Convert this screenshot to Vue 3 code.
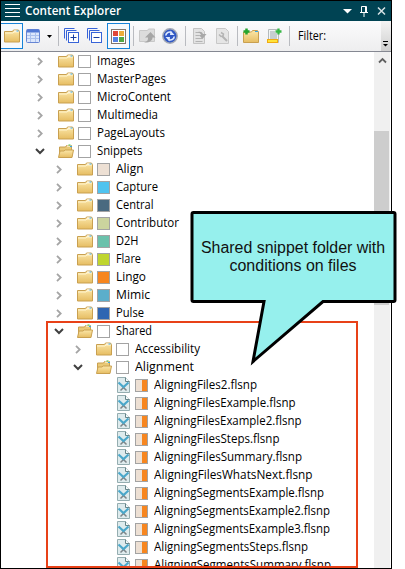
<script setup>
const folders = [
  ['Images', 38], ['MasterPages', 69], ['MicroContent', 74], ['Multimedia', 61], ['PageLayouts', 68],
].map(([text, w]) => ({ text, w, level: 0, kind: 'closed', colors: ['#fff'] }))
const conditions = [
  ['Align', 27.5, '#ede0d4'], ['Capture', 42, '#50c3ef'], ['Central', 37.5, '#4a6a80'],
  ['Contributor', 63, '#cbd49e'], ['D2H', 22.5, '#6bc1ab'], ['Flare', 25, '#bfd52e'],
  ['Lingo', 30, '#f7861f'], ['Mimic', 34, '#5baecb'], ['Pulse', 28, '#2f66b2'],
].map(([text, w, c]) => ({ text, w, level: 1, kind: 'closed', colors: [c] }))
const files = [
  ['AligningFiles2.flsnp', 103], ['AligningFilesExample.flsnp', 141.5], ['AligningFilesExample2.flsnp', 147.5],
  ['AligningFilesSteps.flsnp', 125.5], ['AligningFilesSummary.flsnp', 148], ['AligningFilesWhatsNext.flsnp', 158.5],
  ['AligningSegmentsExample.flsnp', 170], ['AligningSegmentsExample2.flsnp', 176], ['AligningSegmentsExample3.flsnp', 176],
  ['AligningSegmentsSteps.flsnp', 154], ['AligningSegmentsSummary.flsnp', 177],
].map(([text, w]) => ({ text, w, level: 3, kind: 'file', colors: ['#ede0d4', '#f7861f'] }))
const rows = [
  ...folders,
  { text: 'Snippets', w: 45.5, level: 0, kind: 'open', colors: ['#fff'] },
  ...conditions,
  { text: 'Shared', w: 36, level: 1, kind: 'open', colors: ['#fff'] },
  { text: 'Accessibility', w: 65, level: 2, kind: 'closed', colors: ['#fff'] },
  { text: 'Alignment', w: 59, level: 2, kind: 'open', colors: ['#fff'] },
  ...files,
]
</script>

<template>
  <div class="window">
    <svg class="defs" width="0" height="0">
      <defs>
        <linearGradient id="gold" x1="0" y1="0" x2="0" y2="1"><stop offset="0" stop-color="#fbe7a9" /><stop offset="1" stop-color="#e6bd62" /></linearGradient>
        <symbol id="closed" viewBox="0 0 16 14">
          <path d="M.5 13V2.5h8l1-1.500h5l1 1.500V13z" fill="url(#gold)" stroke="#c9a050" />
          <path d="M1 4h8l1-1h5" fill="none" stroke="#fff4cd" />
          <path d="M10 2h4" stroke="#fff" /><path d="M12.500 2h2" stroke="#35a7e8" />
        </symbol>
        <symbol id="open" viewBox="0 0 16 14">
          <path d="M1.500 13V3h6l1-1.500h5V12z" fill="#e9c977" stroke="#c9a050" />
          <path d="M9 2h4" stroke="#fff" /><path d="M10.500 1h2" stroke="#44c33d" /><path d="M12 2.500h2" stroke="#35a7e8" />
          <path d="M.5 13.500L2 7h4l1.200-1h8.300L14 13.500z" fill="url(#gold)" stroke="#c9a050" />
        </symbol>
        <symbol id="file" viewBox="0 0 13 16">
          <path d="M.5.5h8l4 4v11H.5z" fill="#deebed" stroke="#94adb0" />
          <path d="M8.500.5v4h4" fill="#f5fafa" stroke="#66858a" />
          <path d="M3.500 13.500L8 9M9.500 13.500L5 9" stroke="#7d8589" stroke-width="1.500" />
          <path d="M1.500 5.500L7 10.500M11.500 5.500L6 10.500" stroke="#4aa7ca" stroke-width="2.200" />
        </symbol>
      </defs>
    </svg>

    <header class="title">
      <svg width="16" height="14" viewBox="0 0 16 14"><path d="M0 .5h15M0 4.500h15M0 8.500h15M0 12.500h15" stroke="#fff" /></svg>
      <svg class="heading" width="100" height="18"><text x="0" y="13" textLength="96" lengthAdjust="spacingAndGlyphs">Content Explorer</text></svg>
      <svg class="controls" width="44" height="12" viewBox="0 0 44 12">
        <path d="M0 4h9L4.500 8.500z" fill="#fff" />
        <path d="M18.500 7V1.500h5V7M22.500 1.500V7M17 7.500h8M21 8v4" fill="none" stroke="#fff" />
        <path d="M35 2.500l7 7M42 2.500l-7 7" stroke="#d6e2e5" stroke-width="1.500" />
      </svg>
    </header>

    <div class="toolbar">
      <div class="tool first active"><svg width="16" height="14"><use href="#closed" /></svg></div>
      <div class="tool grid"><svg width="26" height="15" viewBox="0 0 26 15">
        <rect x=".5" y=".5" width="13" height="13" rx="1" fill="#dce7fc" stroke="#6685d3" />
        <path d="M1 2h12" stroke="#5279d5" stroke-width="3" /><path d="M1 6.500h12M1 9.500h12M4.500 4v9M9.500 4v9" stroke="#abc1ed" />
        <path d="M21 6h5l-2.500 3z" fill="#000" />
      </svg></div>
      <i class="sep s1"></i>
      <div class="tool plus"><svg width="15" height="16" viewBox="0 0 15 16"><g fill="#fff" stroke="#3864d8"><path d="M.5 10.500V.5h10M2.500 12.500v-10h10" fill="none" /><rect x="4.500" y="4.500" width="10" height="10" /><path d="M6.500 9.500h6M9.500 6.500v6" stroke="#173ca0" /></g></svg></div>
      <div class="tool minus"><svg width="15" height="16" viewBox="0 0 15 16"><g fill="#fff" stroke="#3864d8"><path d="M.5 10.500V.5h10M2.500 12.500v-10h10" fill="none" /><rect x="4.500" y="4.500" width="10" height="10" /><path d="M6.500 9.500h6" stroke="#173ca0" /></g></svg></div>
      <div class="tool tiles active"><svg width="15" height="15" viewBox="0 0 15 15"><rect x=".5" y=".5" width="14" height="14" fill="#fff" stroke="#82756c" /><rect x="2" y="2" width="5" height="5" fill="#df4639" /><rect x="8" y="2" width="5" height="5" fill="#edac39" /><rect x="2" y="8" width="5" height="5" fill="#5481e2" /><rect x="8" y="8" width="5" height="5" fill="#53a844" /></svg></div>
      <i class="sep s2"></i>
      <div class="tool upload"><svg width="17" height="16" viewBox="0 0 17 16"><path d="M.5 13.500v-11h8l1-1.500h6v12.500z" fill="#dcdcdc" stroke="#c8c8c8" /><path d="M5 14.500c4-1 4-3 4-5H6L11.500 4l5 5.500h-3c0 3-3 5.500-8.500 5z" fill="#a6a6a6" /></svg></div>
      <div class="tool refresh"><svg width="16" height="16" viewBox="0 0 16 16"><circle cx="8" cy="8" r="7.200" fill="#2f57c4" stroke="#a3a9b5" stroke-width="1.500" /><path d="M3.800 7.500C4 4.500 7 3.300 9.500 4.500M12.200 8.500C12 11.500 9 12.700 6.500 11.500" fill="none" stroke="#dce8ff" stroke-width="1.700" /><path d="M8.500 2.500l4 4.500H8zM7.500 13.500l-4-4.500H8z" fill="#dce8ff" /></svg></div>
      <i class="sep s3"></i>
      <div class="tool doc"><svg width="14" height="16" viewBox="0 0 14 16"><path d="M.5.5h8l3 3v12H.5z" fill="#e3e3e3" stroke="#c3c3c3" /><path d="M2.500 4.500h4M2.500 7.500h4M2.500 10.500h7M2.500 13.500h7" stroke="#b3b3b3" /><path d="M5 4c3-.5 4 0 5 2h3.500L9.500 11 6 7h2C7.500 5.500 6.500 5 5 4z" fill="#a8a8a8" /></svg></div>
      <div class="tool wrench"><svg width="14" height="16" viewBox="0 0 14 16"><path d="M.5.5h9l3 3v12H.5z" fill="#e5e5e5" stroke="#c8c8c8" /><path d="M6 8l5 5" stroke="#b4b4b4" stroke-width="2" /><path d="M5 4.500L7.500 6 7 8 5 8.500 3 6.500" fill="none" stroke="#b4b4b4" stroke-width="1.500" /></svg></div>
      <i class="sep s4"></i>
      <div class="tool newfolder"><svg width="16" height="16" viewBox="0 0 16 16"><path d="M.5 14.500V4h8l1-1.500h5l1 1.500v10.500z" fill="url(#gold)" stroke="#c9a050" /><path d="M12 3.500h3" stroke="#35a7e8" /><path d="M3.500.5v6M.5 3.500h6" stroke="#24a52e" stroke-width="2.500" /></svg></div>
      <div class="tool newfile"><svg width="16" height="16" viewBox="0 0 16 16"><path d="M1.500 1.500h10v13h-10z" fill="#f2f4f4" stroke="#b4babc" /><path d="M3 4h5M3 6h7M3 8h7M3 10h7" stroke="#9ba8ac" /><path d="M11.500.5v6M8.500 3.500h6" stroke="#36b744" stroke-width="2.300" /><rect x=".5" y="11.500" width="10" height="3" fill="#ffe438" stroke="#f0aa13" /></svg></div>
      <i class="sep s5"></i>
      <svg class="filter" width="34" height="18"><text x="0" y="13" textLength="28" lengthAdjust="spacingAndGlyphs">Filter:</text></svg>
      <div class="overflow"><svg width="6" height="6" viewBox="0 0 6 6"><path d="M0 .5h5" stroke="#000" /><path d="M0 3h5L2.500 5.500z" /></svg></div>
    </div>

    <main class="content">
      <div class="tree">
        <div v-for="row in rows" :key="row.text" :class="['row', 'level' + row.level]">
          <div class="chevron">
            <svg v-if="row.kind === 'closed'" width="6" height="9" viewBox="0 0 6 9"><path d="M1 .8l3.700 3.700L1 8.200" fill="none" stroke="#a5a5a5" stroke-width="1.800" /></svg>
            <svg v-else-if="row.kind === 'open'" width="10" height="7" viewBox="0 0 10 7"><path d="M1 1l4 4 4-4" fill="none" stroke="#404040" stroke-width="2" /></svg>
          </div>
          <div class="icon">
            <svg v-if="row.kind === 'file'" width="13" height="16"><use href="#file" /></svg>
            <svg v-else width="16" height="14"><use :href="'#' + row.kind" /></svg>
          </div>
          <div class="check"><span v-for="color in row.colors" :key="color" :style="{ background: color }"></span></div>
          <svg class="label" width="200" height="18"><text x="0" y="13" :textLength="row.w" lengthAdjust="spacingAndGlyphs">{{ row.text }}</text></svg>
        </div>
      </div>
      <div class="scrollbar">
        <div class="up"><svg width="9" height="7" viewBox="0 0 9 7"><path d="M1 5.500L4.500 2 8 5.500" fill="none" stroke="#606060" stroke-width="1.800" /></svg></div>
        <div class="thumb"></div>
      </div>
    </main>

    <div class="highlight"></div>
    <svg class="callout" width="212" height="158" viewBox="0 0 212 158">
      <path d="M4.500 2.500h200q1.500 0 1.500 1.500v86q0 1.500-1.500 1.500H134L64 151.500 75 91.500H4.500Q3 91.500 3 90V4q0-1.500 1.500-1.500z" fill="#96f0ed" stroke="#000" stroke-width="3" />
      <text x="12" y="43" textLength="184" lengthAdjust="spacingAndGlyphs">Shared snippet folder with</text>
      <text x="40.500" y="61" textLength="127" lengthAdjust="spacingAndGlyphs">conditions on files</text>
    </svg>
  </div>
</template>

<style>
body { margin: 0; background: #fff; overflow: hidden; }
</style>
<style scoped>
* { box-sizing: border-box; }
svg { display: block; flex: none; }
.defs { position: absolute; }
.window { position: relative; width: 392px; height: 569px; border: 1px solid #000; background: #fff; font: 12px "Open Sans", "Noto Sans", sans-serif; display: flex; flex-direction: column; }
.title { height: 20px; flex: none; background: #004353; display: flex; align-items: center; padding: 0 5px 0 4px; }
.heading { margin-left: 4px; }
.heading text { fill: #fff; font-weight: 600; font-size: 12px; }
.controls { margin-left: auto; margin-right: -1px; }
.toolbar { height: 31px; flex: none; display: flex; align-items: center; background: linear-gradient(#fbfbfc, #eeeeef); border-bottom: 1px solid #858892; }
.tool { height: 26px; display: flex; align-items: center; justify-content: center; flex: none; }
.active { border: 1px solid #1683d8; background: #f6f9fc; }
.first { width: 22px; border-left: 0; }
.grid { width: 35px; justify-content: flex-start; padding-left: 3px; }
.sep { width: 1px; height: 20px; background: #b9bbc0; flex: none; }
.plus { width: 25px; }
.minus { width: 23px; padding-right: 2px; }
.tiles { width: 23px; }
.s2 { margin-left: 3px; }
.upload { width: 26px; padding-left: 1px; }
.refresh { width: 20px; }
.s3 { margin-left: 5px; }
.doc { width: 28px; }
.wrench { width: 18px; }
.s4 { margin-left: 5px; }
.newfolder { width: 26px; }
.newfile { width: 22px; }
.s5 { margin-left: 3px; }
.filter { margin-left: 8px; }
.overflow { width: 10px; height: 30px; margin-left: auto; background: linear-gradient(#f4f4f4, #cfcfcf); display: flex; align-items: flex-end; justify-content: center; padding-bottom: 4px; }
.content { flex: 1; min-height: 0; display: flex; }
.tree { flex: 1; min-width: 0; overflow: hidden; }
.row { height: 18px; display: flex; align-items: center; padding-left: 34px; }
.level1 { padding-left: 53px; }
.level2 { padding-left: 72px; }
.level3 { padding-left: 91px; }
.chevron { width: 10px; display: flex; justify-content: center; flex: none; }
.icon { width: 16px; margin-left: 13px; flex: none; display: flex; justify-content: center; }
.check { width: 13px; height: 13px; margin: 0 6px 0 4px; border: 1px solid #a3a3a3; display: flex; flex: none; }
.check span { flex: 1; }
.label text { fill: #000; }
.filter text { fill: #000; font-size: 12px; }
.scrollbar { width: 17px; background: #f0f0f0; border-right: 1px solid #fff; }
.up { height: 17px; display: flex; align-items: center; justify-content: center; }
.thumb { height: 174px; margin: 62px 1px 0 0; background: #cdcdcd; }
.highlight { position: absolute; left: 45px; top: 320px; width: 312px; height: 247px; border: 2px solid #e84118; }
.callout { position: absolute; left: 188px; top: 209px; }
.callout text { font: 16px "Liberation Sans", Arial, sans-serif; fill: #111; }
</style>
